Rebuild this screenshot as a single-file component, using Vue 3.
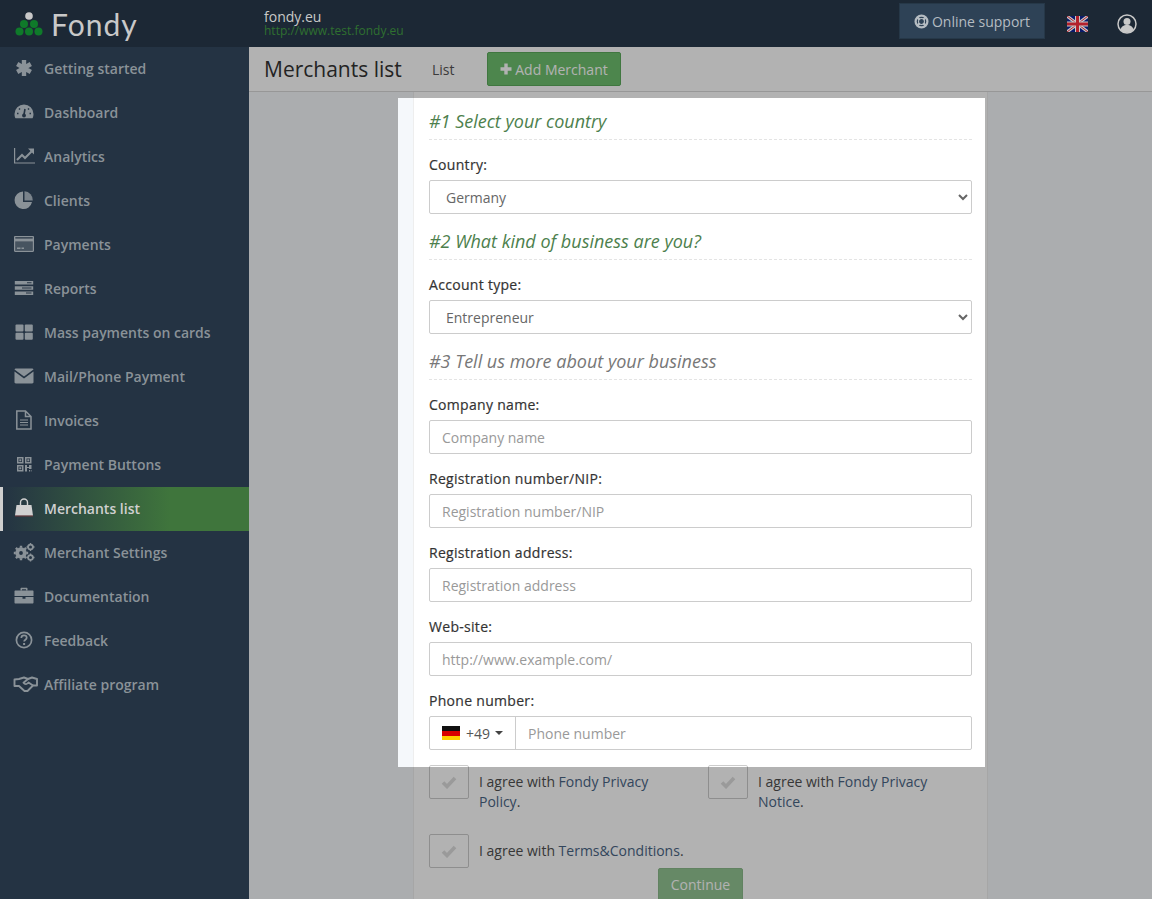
<script setup>
const items = [
  { label: 'Getting started', icon: 'star' },
  { label: 'Dashboard', icon: 'gauge' },
  { label: 'Analytics', icon: 'chart' },
  { label: 'Clients', icon: 'pie' },
  { label: 'Payments', icon: 'card' },
  { label: 'Reports', icon: 'reports' },
  { label: 'Mass payments on cards', icon: 'grid' },
  { label: 'Mail/Phone Payment', icon: 'mail' },
  { label: 'Invoices', icon: 'file' },
  { label: 'Payment Buttons', icon: 'qr' },
  { label: 'Merchants list', icon: 'bag', active: true },
  { label: 'Merchant Settings', icon: 'gears' },
  { label: 'Documentation', icon: 'case' },
  { label: 'Feedback', icon: 'help' },
  { label: 'Affiliate program', icon: 'hands' }
]
const fields = [
  { label: 'Company name:', ph: 'Company name' },
  { label: 'Registration number/NIP:', ph: 'Registration number/NIP' },
  { label: 'Registration address:', ph: 'Registration address' },
  { label: 'Web-site:', ph: 'http://www.example.com/' }
]
</script>

<template>
  <div class="app">
    <header class="top">
      <div class="logo">
        <svg width="28" height="26" viewBox="0 0 28 26">
          <circle cx="14" cy="5" r="3.800" fill="#c8c8c8" />
          <g fill="#0f7a2a">
            <circle cx="9" cy="13" r="4" />
            <circle cx="19" cy="13" r="4" />
            <circle cx="4.500" cy="20.500" r="4" />
            <circle cx="14" cy="20.500" r="4" />
            <circle cx="23.500" cy="20.500" r="4" />
          </g>
        </svg>
        <span class="logotext">Fondy</span>
      </div>
      <div class="site">
        <div class="site-name">fondy.eu</div>
        <div class="site-url">http://www.test.fondy.eu</div>
      </div>
      <button class="support">
        <svg width="15" height="15" viewBox="0 0 16 16" fill="none" stroke="currentColor">
          <circle cx="8" cy="8" r="6.300" stroke-width="2.400" />
          <circle cx="8" cy="8" r="3.200" stroke-width="1.200" />
          <path d="M3.500 3.500l2.500 2.500M12.500 3.500L10 6M3.500 12.500L6 10M12.500 12.500L10 10" stroke-width="2.600" />
        </svg>
        Online support
      </button>
      <svg class="uk" width="21" height="16" viewBox="0 0 21 16">
        <rect width="21" height="16" fill="#0a1a6b" />
        <path d="M0 0l21 16M21 0L0 16" stroke="#c8c8c8" stroke-width="3" />
        <path d="M0 0l21 16M21 0L0 16" stroke="#b3202c" stroke-width="1" />
        <path d="M10.500 0v16M0 8h21" stroke="#c8c8c8" stroke-width="5" />
        <path d="M10.500 0v16M0 8h21" stroke="#b3202c" stroke-width="3" />
      </svg>
      <svg class="user" width="20" height="20" viewBox="0 0 20 20">
        <circle cx="10" cy="10" r="9" fill="#1c2835" stroke="#c8c8c8" stroke-width="1.500" />
        <circle cx="10" cy="7.500" r="3.500" fill="#c8c8c8" />
        <path d="M3.500 16c.5-3.500 3-5 6.500-5s6 1.500 6.500 5a9 9 0 0 1-13 0z" fill="#c8c8c8" />
      </svg>
    </header>

    <div class="body">
      <nav class="side">
        <a v-for="it in items" :key="it.label" class="item" :class="{ active: it.active }">
          <svg class="ico" width="20" height="20" viewBox="0 0 20 20" fill="currentColor">
            <g v-if="it.icon === 'star'" stroke="currentColor" stroke-width="4.400">
              <path d="M10 2v16M3.200 6l13.600 8M16.800 6L3.200 14" />
            </g>
            <g v-else-if="it.icon === 'gauge'">
              <path d="M10 2.500a9.500 9.500 0 0 0-9.500 9.500c0 1.800.4 3.200 1 4.300h17c.6-1.100 1-2.500 1-4.300A9.500 9.500 0 0 0 10 2.500z" />
              <path d="M10 12.500l1-5.500M5 6.500l1 1M15 6.500l-1 1M3 11.500h1.500M17 11.500h-1.500" stroke="#233242" stroke-width="1.600" fill="none" />
              <circle cx="10" cy="13.500" r="1.900" fill="#233242" />
            </g>
            <g v-else-if="it.icon === 'chart'" fill="none" stroke="currentColor">
              <path d="M.6 2v15H21" stroke-width="1.200" />
              <path d="M3 14l5-5 3 3 6.500-6.500" stroke-width="2" />
              <path d="M14 2.500h6v6z" fill="currentColor" stroke="none" />
            </g>
            <g v-else-if="it.icon === 'pie'">
              <path d="M9 1.500a8.800 8.800 0 1 0 9 10.500H9z" />
              <path d="M10.500 1.200V10.500h8.300A8.800 8.800 0 0 0 10.500 1.200z" opacity=".85" />
            </g>
            <g v-else-if="it.icon === 'card'">
              <path fill-rule="evenodd" d="M1.200 2h17.600c.7 0 1.200.5 1.200 1.200v13.600c0 .7-.5 1.200-1.200 1.200H1.200C.5 18 0 17.500 0 16.800V3.200C0 2.500.5 2 1.200 2zm.1 1.300v1.200h17.400V3.300zm0 4.200v9.200h17.400V7.500z" />
              <path d="M1.300 7.500h17.400v9.200H1.300z" opacity=".35" />
              <path d="M3 13.500h3.500v1.500H3zM7.500 13.500h2.500v1.500H7.500z" />
            </g>
            <g v-else-if="it.icon === 'reports'">
              <path fill-rule="evenodd" d="M.8 3h18.400v3.600H.8zM13 4.200v1h4.500v-1zM.8 8.200h18.400v3.600H.8zM8 9.400v1h9.500v-1zM.8 13.400h18.400V17H.8zM12 14.600v1h5.500v-1z" />
            </g>
            <g v-else-if="it.icon === 'grid'">
              <rect x="1.500" y="2.500" width="8" height="7" rx="1" />
              <rect x="10.800" y="2.500" width="8" height="7" rx="1" />
              <rect x="1.500" y="10.700" width="8" height="7" rx="1" />
              <rect x="10.800" y="10.700" width="8" height="7" rx="1" />
            </g>
            <g v-else-if="it.icon === 'mail'">
              <path d="M.5 3.500L10 10.500l9.500-7c-.2-.7-.7-1-1.300-1H1.800c-.6 0-1.100.3-1.300 1z" />
              <path d="M.5 5.500v10.800c0 .7.600 1.200 1.300 1.200h16.400c.7 0 1.300-.5 1.300-1.200V5.500L10 12.500z" />
            </g>
            <g v-else-if="it.icon === 'file'" fill="none" stroke="currentColor" stroke-width="1.500">
              <path d="M2.800 1h8.700l5.500 5.500v12.500H2.800zM11.500 1v5.500H17" />
              <path d="M6 10h8M6 12.500h8M6 15h8" stroke-width="1.200" />
            </g>
            <g v-else-if="it.icon === 'qr'">
              <path fill-rule="evenodd" d="M3 3h6.500v6.500H3zM4.500 4.500V8H8V4.500zM11 3h6.500v6.500H11zM12.500 4.500V8H16V4.500zM3 11h6.500v6.500H3zM4.500 12.500V16H8v-3.500z" />
              <rect x="5.300" y="5.300" width="2" height="2" />
              <rect x="13.300" y="5.300" width="2" height="2" />
              <rect x="5.300" y="13.300" width="2" height="2" />
              <path d="M11 11h2v2h2v-2h2.500v4H15v-1h-2v3.500h-2zM15 16h1v1.500h-1zM16.800 16h.7v1.500h-.7z" />
            </g>
            <g v-else-if="it.icon === 'bag'">
              <path d="M2.500 7h15l1.500 10.500H1z" />
              <path d="M1 17.500h18v1H1z" fill="#b03030" opacity=".5" />
              <path d="M6.500 9V4.500a3.500 3.500 0 0 1 7 0V9" fill="none" stroke="currentColor" stroke-width="1.400" />
            </g>
            <g v-else-if="it.icon === 'gears'">
              <circle cx="7" cy="11" r="3.800" fill="none" stroke="currentColor" stroke-width="3.800" />
              <path d="M7 3.800V18.200M-.2 11H14.200M1.900 5.900L12.100 16.100M12.100 5.900L1.900 16.100" stroke="currentColor" stroke-width="2.400" stroke-dasharray="2 10.400" />
              <circle cx="16.500" cy="5" r="2.400" fill="none" stroke="currentColor" stroke-width="1.800" />
              <circle cx="16.500" cy="15.500" r="2.400" fill="none" stroke="currentColor" stroke-width="1.800" />
              <path d="M16.500 1v8M12.500 5H20.500M16.500 11.500v8M12.500 15.500H20.500" stroke="currentColor" stroke-width="1.400" stroke-dasharray="1.500 5" />
            </g>
            <g v-else-if="it.icon === 'case'">
              <path d="M6.500 4.500V2.800c0-.6.400-1 1-1h5c.6 0 1 .4 1 1v1.700h-1.500V3.300H8v1.200z" />
              <path d="M1.500 4.500h17c.6 0 1 .4 1 1V10H.5V5.500c0-.6.400-1 1-1z" />
              <path d="M.5 11h8v1.800h3V11h8v5.500c0 .6-.4 1-1 1h-17c-.6 0-1-.4-1-1z" />
            </g>
            <g v-else-if="it.icon === 'help'">
              <circle cx="10" cy="10" r="7.600" fill="none" stroke="currentColor" stroke-width="1.700" />
              <path d="M7.300 7.900c0-1.600 1.200-2.500 2.700-2.500s2.700.9 2.700 2.300c0 2-2.600 2-2.600 3.900" fill="none" stroke="currentColor" stroke-width="1.700" />
              <rect x="9.100" y="13" width="2" height="2" />
            </g>
            <g v-else-if="it.icon === 'hands'" fill="none" stroke="currentColor" stroke-width="1.900" stroke-linejoin="round">
              <path d="M.5 5.500L5 5l5-1.500L14 5l4-1.500 5 1.500v6.500h-4L13.500 17H10.500L5 12H.5z" />
              <path d="M14 5L9.500 8.800c1.500 2 3.500 1.500 5-.3L19 11.500" />
            </g>
          </svg>
          <span>{{ it.label }}</span>
        </a>
      </nav>

      <main class="main">
        <div class="bar">
          <h1>Merchants list</h1>
          <span class="tab">List</span>
          <button class="add">
            <svg width="12" height="12" viewBox="0 0 12 12"><path d="M6 .5v11M.5 6h11" stroke="#fff" stroke-width="3.400" fill="none" /></svg>
            Add Merchant
          </button>
        </div>

        <div class="panel">
          <h3 class="step green">#1 Select your country</h3>
          <label class="lab">Country:</label>
          <select class="ctl sel"><option>Germany</option></select>

          <h3 class="step green">#2 What kind of business are you?</h3>
          <label class="lab">Account type:</label>
          <select class="ctl sel"><option>Entrepreneur</option></select>

          <h3 class="step">#3 Tell us more about your business</h3>
          <template v-for="f in fields" :key="f.label">
            <label class="lab">{{ f.label }}</label>
            <input class="ctl inp" :placeholder="f.ph" />
          </template>
          <label class="lab">Phone number:</label>
          <div class="phone">
            <div class="dial">
              <svg width="18" height="14" viewBox="0 0 18 14">
                <rect width="18" height="5" fill="#111" />
                <rect y="5" width="18" height="5" fill="#d90000" />
                <rect y="10" width="18" height="4" fill="#ffcf00" />
              </svg>
              <span>+49</span>
              <i class="caret"></i>
            </div>
            <input class="num" placeholder="Phone number" />
          </div>

          <div class="agrees">
            <div class="agree">
              <span class="box"><svg width="16" height="13" viewBox="0 0 16 13"><path d="M2 6.500l4 4 8-8.500" fill="none" stroke="#ddd" stroke-width="3.600" /></svg></span>
              <p>I agree with <a>Fondy Privacy</a><br /><a>Policy</a>.</p>
            </div>
            <div class="agree">
              <span class="box"><svg width="16" height="13" viewBox="0 0 16 13"><path d="M2 6.500l4 4 8-8.500" fill="none" stroke="#ddd" stroke-width="3.600" /></svg></span>
              <p>I agree with <a>Fondy Privacy</a><br /><a>Notice</a>.</p>
            </div>
          </div>
          <div class="agree third">
            <span class="box"><svg width="16" height="13" viewBox="0 0 16 13"><path d="M2 6.500l4 4 8-8.500" fill="none" stroke="#ddd" stroke-width="3.600" /></svg></span>
            <p>I agree with <a>Terms&amp;Conditions</a>.</p>
          </div>
          <div class="cta"><button class="cont">Continue</button></div>
        </div>

        <div class="spot"></div>
      </main>
    </div>
  </div>
</template>

<style scoped>
.app { height: 899px; overflow: hidden; display: flex; flex-direction: column; font-family: "Open Sans", sans-serif; font-size: 14px; color: #333; }
.top { height: 47px; flex: none; background: #1c2835; display: flex; align-items: center; color: #c8c8c8; }
.logo { width: 264px; flex: none; display: flex; align-items: center; padding-left: 15px; box-sizing: border-box; height: 47px; }
.logotext { font-family: Lato, sans-serif; font-size: 30px; letter-spacing: 1px; color: #c9c9c9; margin-left: 8px; line-height: 1; }
.site { line-height: 14px; margin-top: 1px; }
.site-name { font-size: 14px; color: #c8c8c8; }
.site-url { font-size: 12px; color: #2f7030; }
.support { margin-left: auto; width: 146px; height: 36px; margin-top: -5px; background: #2e4256; border: 1px solid #263848; color: #b5bcc2; font: inherit; font-size: 14px; padding: 0; display: flex; align-items: center; justify-content: center; gap: 3px; }
.uk { margin-left: 22px; }
.user { margin-left: 29px; margin-right: 15px; }
.body { flex: 1; display: flex; min-height: 0; }
.side { width: 249px; flex: none; background: #243343; }
.item { height: 44px; display: flex; align-items: center; color: #8a9298; font-weight: 600; padding: 0 0 2px 14px; box-sizing: border-box; gap: 10px; }
.ico { flex: none; overflow: visible; }
.item.active { color: #d0d0d0; background: linear-gradient(90deg, #243343 0%, #3f753c 68%, #3f753c 100%); border-left: 3px solid #cfcfcf; padding-left: 11px; }
.main { flex: 1; min-width: 0; position: relative; overflow: hidden; background: #f5f8fb; }
.bar { height: 44px; background: #fff; border-bottom: 1px solid #d8d8d8; display: flex; align-items: center; padding-left: 15px; }
h1 { margin: 0; font-size: 21px; font-weight: 400; color: #333; width: 168px; }
.tab { color: #555; width: 55px; }
.add { height: 34px; width: 134px; background: #6fc16f; border: 1px solid #5cab5c; border-radius: 2px; color: #fff; font: inherit; font-size: 14px; padding: 0; display: flex; align-items: center; justify-content: center; gap: 3px; }
.panel { width: 543px; margin-left: 164px; padding: 16px 15px 0; background: #fff; border: 1px solid #eee; border-top: 0; }
.step { margin: 15px 0 0; padding-bottom: 6px; font-size: 18px; line-height: 24px; font-weight: 400; font-style: italic; color: #777; border-bottom: 1px dashed #e4e4e4; }
.step:first-child { margin-top: 1px; }
.green { color: #4d7f4d; }
.lab { display: block; margin: 15px 0 5px; line-height: 20px; font-weight: 400; letter-spacing: .3px; -webkit-text-stroke: .2px #333; color: #333; }
.ctl { display: block; width: 100%; height: 34px; box-sizing: border-box; border: 1px solid #ccc; border-radius: 2px; background: #fff; font: inherit; font-size: 14px; outline: 0; }
.sel { padding: 0 12px; color: #666; }
.inp { padding: 0 12px; color: #555; }
.inp::placeholder, .num::placeholder { color: #999; opacity: 1; }
.phone { display: flex; height: 34px; box-sizing: border-box; border: 1px solid #ccc; border-radius: 2px; }
.dial { width: 86px; flex: none; box-sizing: border-box; border-right: 1px solid #ccc; display: flex; align-items: center; padding-left: 12px; color: #555; }
.dial span { margin-left: 6px; }
.caret { margin-left: 5px; width: 0; height: 0; border: 4px solid transparent; border-top-color: #444; border-bottom: 0; }
.num { flex: 1; min-width: 0; border: 0; outline: 0; padding: 0 12px; font: inherit; font-size: 14px; background: transparent; }
.agrees { display: grid; grid-template-columns: 264px 264px; column-gap: 15px; margin-top: 15px; height: 69px; }
.agree { display: flex; align-items: flex-start; gap: 10px; }
.third { height: 34px; }
.box { width: 40px; height: 34px; flex: none; box-sizing: border-box; border: 1px solid #ccc; border-radius: 2px; display: flex; align-items: center; justify-content: center; background: #fff; }
.agree p { margin: 7px 0 0; line-height: 20px; color: #505050; }
.agree a { color: #4a6585; }
.cta { display: flex; justify-content: center; }
.cont { width: 85px; height: 34px; background: #93c493; border: 1px solid #8bbb8b; border-radius: 2px; color: #fff; font: inherit; font-size: 14px; padding: 0 0 2px; }
.spot { position: absolute; left: 149px; top: 51px; width: 587px; height: 669px; box-shadow: 0 0 0 2000px rgba(0, 0, 0, .3); pointer-events: none; }
</style>
